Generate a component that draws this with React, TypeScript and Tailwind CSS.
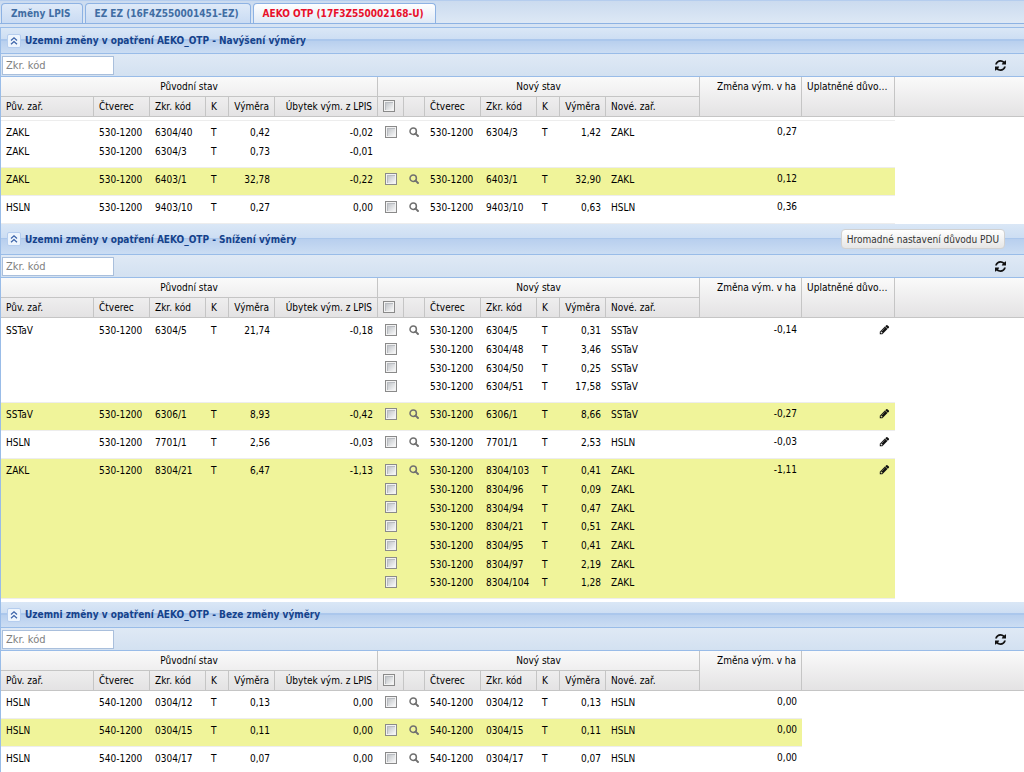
import { useState } from 'react'

type Parcel = { zar: string, ctverec: string, kod: string, k: string, vymera: string, ubytek?: string }
type Zmena = { puvodni: Parcel[], nove: Parcel[], zmena: string, editable?: boolean }

function parcel(ctverec: string, kod: string, vymera: string, zar: string, ubytek?: string): Parcel {
    return { zar, ctverec, kod, k: 'T', vymera, ubytek }
}

const navyseni: Zmena[] = [
    {
        puvodni: [
            parcel('530-1200', '6304/40', '0,42', 'ZAKL', '-0,02'),
            parcel('530-1200', '6304/3', '0,73', 'ZAKL', '-0,01'),
        ],
        nove: [parcel('530-1200', '6304/3', '1,42', 'ZAKL')],
        zmena: '0,27',
    },
    {
        puvodni: [parcel('530-1200', '6403/1', '32,78', 'ZAKL', '-0,22')],
        nove: [parcel('530-1200', '6403/1', '32,90', 'ZAKL')],
        zmena: '0,12',
    },
    {
        puvodni: [parcel('530-1200', '9403/10', '0,27', 'HSLN', '0,00')],
        nove: [parcel('530-1200', '9403/10', '0,63', 'HSLN')],
        zmena: '0,36',
    },
]

const snizeni: Zmena[] = [
    {
        puvodni: [parcel('530-1200', '6304/5', '21,74', 'SSTaV', '-0,18')],
        nove: [
            parcel('530-1200', '6304/5', '0,31', 'SSTaV'),
            parcel('530-1200', '6304/48', '3,46', 'SSTaV'),
            parcel('530-1200', '6304/50', '0,25', 'SSTaV'),
            parcel('530-1200', '6304/51', '17,58', 'SSTaV'),
        ],
        zmena: '-0,14',
        editable: true,
    },
    {
        puvodni: [parcel('530-1200', '6306/1', '8,93', 'SSTaV', '-0,42')],
        nove: [parcel('530-1200', '6306/1', '8,66', 'SSTaV')],
        zmena: '-0,27',
        editable: true,
    },
    {
        puvodni: [parcel('530-1200', '7701/1', '2,56', 'HSLN', '-0,03')],
        nove: [parcel('530-1200', '7701/1', '2,53', 'HSLN')],
        zmena: '-0,03',
        editable: true,
    },
    {
        puvodni: [parcel('530-1200', '8304/21', '6,47', 'ZAKL', '-1,13')],
        nove: [
            parcel('530-1200', '8304/103', '0,41', 'ZAKL'),
            parcel('530-1200', '8304/96', '0,09', 'ZAKL'),
            parcel('530-1200', '8304/94', '0,47', 'ZAKL'),
            parcel('530-1200', '8304/21', '0,51', 'ZAKL'),
            parcel('530-1200', '8304/95', '0,41', 'ZAKL'),
            parcel('530-1200', '8304/97', '2,19', 'ZAKL'),
            parcel('530-1200', '8304/104', '1,28', 'ZAKL'),
        ],
        zmena: '-1,11',
        editable: true,
    },
]

const bezeZmeny: Zmena[] = [
    {
        puvodni: [parcel('540-1200', '0304/12', '0,13', 'HSLN', '0,00')],
        nove: [parcel('540-1200', '0304/12', '0,13', 'HSLN')],
        zmena: '0,00',
    },
    {
        puvodni: [parcel('540-1200', '0304/15', '0,11', 'HSLN', '0,00')],
        nove: [parcel('540-1200', '0304/15', '0,11', 'HSLN')],
        zmena: '0,00',
    },
    {
        puvodni: [parcel('540-1200', '0304/17', '0,07', 'HSLN', '0,00')],
        nove: [parcel('540-1200', '0304/17', '0,07', 'HSLN')],
        zmena: '0,00',
    },
]

function SearchIcon() {
    return (
        <svg viewBox="0 0 10 10" className="size-[10px]" fill="none" stroke="#707070" strokeWidth="1.5">
            <circle cx="4.2" cy="4.2" r="3.2" />
            <path d="M6.6 6.6 L9 9" strokeWidth="1.9" strokeLinecap="round" />
        </svg>
    )
}

function RefreshIcon() {
    return (
        <svg viewBox="0 0 1536 1536" className="size-[11px]" fill="#111">
            <path d="M1511 928q0 5-1 7-64 268-268 434.500T764 1536q-146 0-282.500-55T238 1324l-129 129q-19 19-45 19t-45-19-19-45V960q0-26 19-45t45-19h448q26 0 45 19t19 45-19 45l-137 137q71 66 161 102t187 36q134 0 250-65t186-179q11-17 53-117 8-23 30-23h192q13 0 22.500 9.500t9.500 22.500zm25-800v448q0 26-19 45t-45 19h-448q-26 0-45-19t-19-45 19-45l138-138Q969 256 768 256q-134 0-250 65T332 500q-11 17-53 117-8 23-30 23H50q-13 0-22.500-9.500T18 608v-7q65-268 270-434.500T768 0q146 0 284 55.500T1297 212l130-129q19-19 45-19t45 19 19 45z" />
        </svg>
    )
}

function PencilIcon() {
    return (
        <svg viewBox="0 0 1792 1792" className="size-[11px]" fill="#111">
            <path d="M491 1536l91-91-235-235-91 91v107h128v128h107zm523-928q0-22-22-22-10 0-17 7l-542 542q-7 7-7 17 0 22 22 22 10 0 17-7l542-542q7-7 7-17zm-54-192l416 416-832 832H128v-416zm683 96q0 53-37 90l-166 166-416-416 166-165q36-38 90-38 53 0 91 38l235 234q37 39 37 91z" />
        </svg>
    )
}

function CollapseIcon() {
    return (
        <svg viewBox="0 0 12 12" className="size-3" fill="none" stroke="#3a62a8" strokeWidth="1.2">
            <path d="M3 5.500 L6 2.700 L9 5.500 M3 9.300 L6 6.500 L9 9.300" />
        </svg>
    )
}

function Check({ label }: { label: string }) {
    return (
        <input
            type="checkbox"
            aria-label={label}
            className="block size-3 appearance-none border border-[#8a8a8a] bg-linear-to-br from-[#b4b8bd] to-white shadow-[inset_0_0_0_1px_#f2f2f2,inset_1px_1px_0_1px_#b9bcc1] checked:from-[#4b6c9c]"
        />
    )
}

const line = 'flex h-[19px] items-center nth-[3n]:h-[18px]'
const th = 'h-5 overflow-hidden border-r border-b border-[#c5c5c5] pb-px font-normal'
const cell = 'border-b border-[#ededed] align-top'

function Lines({ values, right }: { values: string[], right?: boolean }) {
    return (
        <td className={`${cell} px-[5px] pt-[2px] pb-[6px]`}>
            {values.map((value, i) => (
                <div key={i} className={right ? `${line} justify-end` : line}>{value}</div>
            ))}
        </td>
    )
}

function ZmenaRow({ item, odd, duvody }: { item: Zmena, odd: boolean, duvody: boolean }) {
    const { puvodni, nove } = item
    return (
        <tr className={odd ? '[&>td:not(:last-child)]:bg-[#f0f49a]' : ''}>
            <Lines values={puvodni.map((p) => p.zar)} />
            <Lines values={puvodni.map((p) => p.ctverec)} />
            <Lines values={puvodni.map((p) => p.kod)} />
            <Lines values={puvodni.map((p) => p.k)} />
            <Lines values={puvodni.map((p) => p.vymera)} right />
            <Lines values={puvodni.map((p) => p.ubytek ?? '')} right />
            <td className={`${cell} pt-px pl-[7px]`}>
                {nove.map((p) => (
                    <div key={p.kod} className={line}><Check label={`Vybrat ${p.kod}`} /></div>
                ))}
            </td>
            <td className={`${cell} pt-px pl-[5px]`}>
                <div className={line}>
                    <button type="button" aria-label="Zobrazit detail"><SearchIcon /></button>
                </div>
            </td>
            <Lines values={nove.map((p) => p.ctverec)} />
            <Lines values={nove.map((p) => p.kod)} />
            <Lines values={nove.map((p) => p.k)} />
            <Lines values={nove.map((p) => p.vymera)} right />
            <Lines values={nove.map((p) => p.zar)} />
            <td className={`${cell} px-[5px] pt-px`}>
                <div className={`${line} justify-end`}>{item.zmena}</div>
            </td>
            {duvody && (
                <td className={`${cell} px-[5px] pt-px`}>
                    {item.editable && (
                        <div className={`${line} justify-end`}>
                            <button type="button" aria-label="Upravit důvod"><PencilIcon /></button>
                        </div>
                    )}
                </td>
            )}
            <td></td>
        </tr>
    )
}

function Grid({ items, duvody, spacer }: { items: Zmena[], duvody: boolean, spacer?: string }) {
    return (
        <table className="w-full table-fixed border-separate border-spacing-0 whitespace-nowrap">
            <colgroup>
                <col className="w-[93px]" />
                <col className="w-[56px]" />
                <col className="w-[56px]" />
                <col className="w-[23px]" />
                <col className="w-[46px]" />
                <col className="w-[103px]" />
                <col className="w-[26px]" />
                <col className="w-[21px]" />
                <col className="w-[56px]" />
                <col className="w-[56px]" />
                <col className="w-[23px]" />
                <col className="w-[46px]" />
                <col className="w-[94px]" />
                <col className="w-[102px]" />
                {duvody && <col className="w-[93px]" />}
                <col />
            </colgroup>
            <thead className="bg-linear-to-b from-[#fafafa] to-[#e3e2e3]">
                <tr>
                    <th colSpan={6} className={`${th} text-center`}>Původní stav</th>
                    <th colSpan={7} className={`${th} text-center`}>Nový stav</th>
                    <th rowSpan={2} className={`${th} px-[5px] pt-[3px] text-right align-top`}>Změna vým. v ha</th>
                    {duvody && <th rowSpan={2} className={`${th} px-[5px] pt-[3px] text-left align-top text-ellipsis`}>Uplatněné důvody</th>}
                    <td rowSpan={2} className="border-b border-[#c5c5c5]"></td>
                </tr>
                <tr>
                    <th className={`${th} pl-[5px] text-left`}>Pův. zař.</th>
                    <th className={`${th} pl-[5px] text-left`}>Čtverec</th>
                    <th className={`${th} pl-[5px] text-left`}>Zkr. kód</th>
                    <th className={`${th} pl-[5px] text-left`}>K</th>
                    <th className={`${th} pr-[5px] text-right`}>Výměra</th>
                    <th className={`${th} pr-[5px] text-right`}>Úbytek vým. z LPIS</th>
                    <th className={`${th} pl-[5px] text-left`}><Check label="Vybrat vše" /></th>
                    <th className={th}></th>
                    <th className={`${th} pl-[5px] text-left`}>Čtverec</th>
                    <th className={`${th} pl-[5px] text-left`}>Zkr. kód</th>
                    <th className={`${th} pl-[5px] text-left`}>K</th>
                    <th className={`${th} pr-[5px] text-right`}>Výměra</th>
                    <th className={`${th} pl-[5px] text-left`}>Nové. zař.</th>
                </tr>
            </thead>
            <tbody>
                {spacer && (
                    <tr>
                        <td colSpan={15} className={spacer}></td>
                        <td></td>
                    </tr>
                )}
                {items.map((item, i) => (
                    <ZmenaRow key={i} item={item} odd={i % 2 === 1} duvody={duvody} />
                ))}
            </tbody>
        </table>
    )
}

type PanelProps = {
    title: string
    items: Zmena[]
    duvody?: boolean
    spacer?: string
    action?: string
}

function Panel({ title, items, duvody = false, spacer, action }: PanelProps) {
    const [open, setOpen] = useState(true)
    const [filter, setFilter] = useState('')
    const visible = items.filter((item) => [...item.puvodni, ...item.nove].some((p) => p.kod.includes(filter)))

    return (
        <section className={`border-l border-[#99bce8] ${action ? 'pb-[3px]' : ''}`}>
            <header className={`flex items-center border-b border-[#99bce8] bg-[linear-gradient(#dae7f6,#cddef3_45%,#abc7ec_46%,#abc7ec_50%,#b8cfee_51%,#cbddf3)] pr-[19px] pl-[6px] ${action ? 'h-[31px]' : 'h-[26px]'}`}>
                <button
                    type="button"
                    aria-label="Sbalit"
                    onClick={() => setOpen(!open)}
                    className="rounded-xs border border-[#b5cdee] bg-[#eef5fd]"
                >
                    <CollapseIcon />
                </button>
                <h2 className="ml-[4px] flex-1 font-bold text-[#15428b]">{title}</h2>
                {action && (
                    <button type="button" className="h-5 rounded-sm border border-[#d1d1d1] bg-linear-to-b from-white to-[#e6e6e6] px-[5px] text-[#333]">
                        {action}
                    </button>
                )}
            </header>
            {open && (
                <>
                    <div className="flex h-[23px] items-center justify-between border-b border-[#99bce8] bg-linear-to-b from-[#dfe9f5] to-[#d3e1f1] pr-[18px] pl-[1px]">
                        <input
                            type="text"
                            aria-label="Zkr. kód"
                            placeholder="Zkr. kód"
                            value={filter}
                            onChange={(e) => setFilter(e.target.value)}
                            className="h-[19px] w-28 border border-[#a9bfdc] bg-white px-[3px] text-[11px] placeholder:text-[#808080]"
                        />
                        <button type="button" aria-label="Obnovit" className="pt-px"><RefreshIcon /></button>
                    </div>
                    <Grid items={visible} duvody={duvody} spacer={spacer} />
                </>
            )}
        </section>
    )
}

const tabs = ['Změny LPIS', 'EZ EZ (16F4Z550001451-EZ)', 'AEKO OTP (17F3Z550002168-U)']

export default function App() {
    const [active, setActive] = useState(2)

    return (
        <div className="min-h-screen bg-white font-['DejaVu_Sans_Condensed','DejaVu_Sans',sans-serif] text-[10px] leading-[13px] text-black [font-stretch:condensed]">
            <nav className="border-b border-[#99bce8] bg-[#d6e3f3]">
                <div className="flex h-6 items-end gap-[2px] border-t border-b border-t-[#b5cdee] border-b-[#8db2e3] bg-linear-to-b from-[#cbdbef] to-[#dde8f5] pl-[1px]">
                    {tabs.map((tab, i) => (
                        <button
                            key={tab}
                            type="button"
                            onClick={() => setActive(i)}
                            className={`h-[20px] rounded-t border border-b-0 border-[#8db2e3] pr-[11px] pl-[9px] font-bold ${i === active ? 'bg-linear-to-b from-white to-[#dfe9f6] text-[#e8102a]' : 'bg-linear-to-b from-[#dfeaf8] to-[#c9dbf3] text-[#416da3]'}`}
                        >
                            {tab}
                        </button>
                    ))}
                </div>
                <div className="h-[3px]"></div>
            </nav>
            <main>
                <Panel title="Uzemni změny v opatření AEKO_OTP - Navýšení výměry" items={navyseni} duvody spacer="h-[4px] border-b border-[#ededed]" />
                <Panel title="Uzemni změny v opatření AEKO_OTP - Snížení výměry" items={snizeni} duvody spacer="h-px" action="Hromadné nastavení důvodu PDU" />
                <Panel title="Uzemni změny v opatření AEKO_OTP - Beze změny výměry" items={bezeZmeny} />
            </main>
        </div>
    )
}
